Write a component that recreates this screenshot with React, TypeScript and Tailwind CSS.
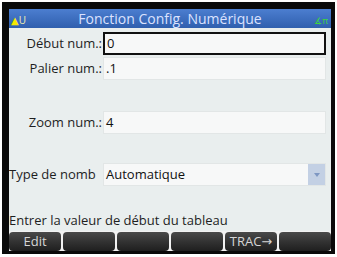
import React from 'react';

const font = { fontFamily: '"Open Sans", "Noto Sans", "DejaVu Sans", sans-serif' };

interface FieldRowProps {
    label: string;
    value: string;
    selected?: boolean;
    dropdown?: boolean;
    labelClass?: string;
    className?: string;
}

const FieldRow: React.FC<FieldRowProps> = ({ label, value, selected, dropdown, labelClass = 'justify-end', className = '' }) => {
    return (
        <div className={`flex h-[23px] items-stretch ${className}`}>
            <div className={`flex w-[94px] shrink-0 items-center overflow-hidden whitespace-nowrap pr-[1px] text-[13px] text-[#1e1e1e] ${labelClass}`}>
                {label}
            </div>
            <div
                className={`relative flex w-[223px] items-center bg-[#f7f8f8] pl-[2px] text-[13px] text-[#111] ${
                    selected ? 'border-2 border-[#111]' : 'border border-[#e2e6e6]'
                }`}
            >
                {value}
                {dropdown && (
                    <div className="absolute right-0 top-0 flex h-full w-[17px] items-center justify-center bg-[#c3d0e4]">
                        <div className="h-0 w-0 border-x-[3px] border-t-[4px] border-x-transparent border-t-[#7e97c2]" />
                    </div>
                )}
            </div>
        </div>
    );
};

const SoftKey: React.FC<{ label?: string }> = ({ label }) => (
    <div className="flex h-full flex-1 items-center justify-center rounded-[4px] bg-gradient-to-b from-[#4a4a4a] via-[#333] to-[#1f1f1f] text-[13px] text-[#d6d6d6]">
        {label}
    </div>
);

export default function App() {
    return (
        <div className="h-[257px] w-[337px] bg-white pl-[2px] pt-[2px]" style={font}>
            <div className="flex h-[252px] w-[333px] flex-col bg-[#0a0a0a] pb-[3px] pl-[7px] pr-[4px] pt-[7px]">
                {/* title bar */}
                <div className="relative flex h-[19px] shrink-0 items-center justify-center bg-gradient-to-b from-[#4c7ed0] to-[#2f5fae]">
                    <span className="text-[14px] leading-none text-[#dbe2ff]">Fonction Config. Numérique</span>
                    <div className="absolute left-[2px] top-[6px] flex items-end text-[10px] leading-none">
                        <span className="text-[#f6e800]">▲</span>
                        <span className="text-[#f4f0b0]">U</span>
                    </div>
                    <span className="absolute right-[3px] top-[7px] text-[9px] leading-none text-[#3fd43f]">∡π</span>
                </div>

                {/* body */}
                <div className="flex flex-1 flex-col bg-[#e9eeee] pt-[4px]">
                    <FieldRow label="Début num.:" value="0" selected />
                    <FieldRow label="Palier num.:" value=".1" className="mt-[2px]" />
                    <FieldRow label="Zoom num.:" value="4" className="mt-[31px]" />
                    <FieldRow label="Type de nomb" value="Automatique" dropdown labelClass="justify-start" className="mt-[29px]" />
                    <div className="mt-auto pb-[2px] text-[13px] leading-[17px] text-[#1e1e1e]">
                        Entrer la valeur de début du tableau
                    </div>
                </div>

                {/* soft keys */}
                <div className="flex h-[20px] shrink-0 gap-[2px] bg-[#f2f2f2] pt-[1px]">
                    <SoftKey label="Edit" />
                    <SoftKey />
                    <SoftKey />
                    <SoftKey />
                    <SoftKey label="TRAC→" />
                    <SoftKey />
                </div>
            </div>
        </div>
    );
}
